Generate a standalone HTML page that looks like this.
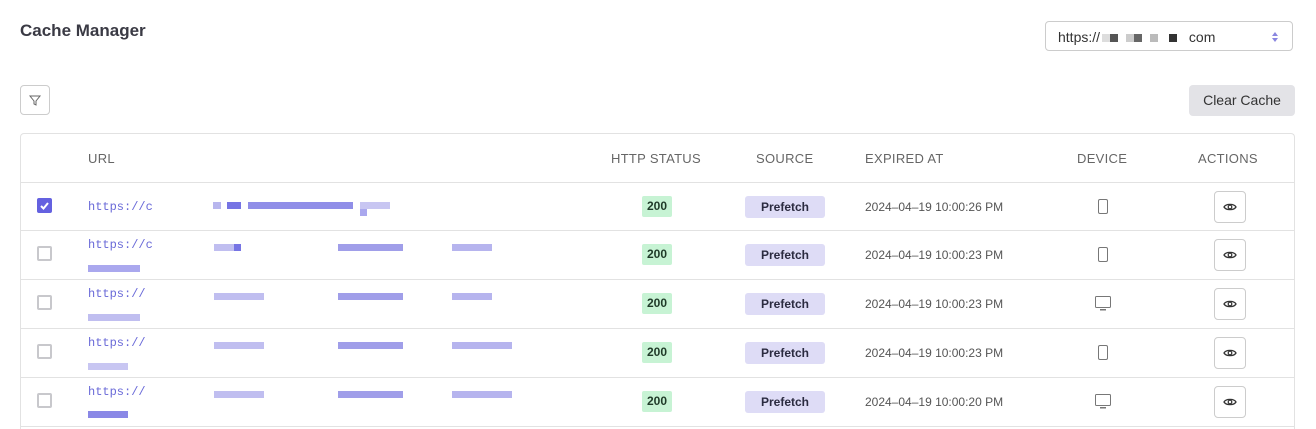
<!DOCTYPE html>
<html style="height:429px;overflow:hidden"><head><style>
body{margin:0;width:1316px;height:429px;background:#fff;font-family:"Liberation Sans",sans-serif;position:relative;overflow:hidden;color:#333}
.abs{position:absolute}
h1{position:absolute;left:20px;top:21px;margin:0;font-size:17px;font-weight:600;color:#3a3a44}
.sel{left:1045px;top:21px;width:248px;height:30px;border:1px solid #ccc;border-radius:4px;font-size:14px;line-height:30px;box-sizing:border-box;padding-left:12px;color:#333}
.filter{left:20px;top:85px;width:30px;height:30px;border:1px solid #ccc;border-radius:4px;box-sizing:border-box}
.clear{left:1189px;top:85px;width:106px;height:31px;background:#e3e3e7;border-radius:4px;font-size:14px;line-height:31px;text-align:center;color:#333}
.tbl{left:20px;top:133px;width:1275px;height:296px;border:1px solid #e2e2e2;border-bottom:none;border-radius:4px 4px 0 0;box-sizing:border-box}
.hl{position:absolute;left:21px;width:1274px;height:1px;background:#e2e2e2}
.th{position:absolute;top:151px;font-size:13px;color:#666;letter-spacing:.3px}
.cb{position:absolute;left:37px;width:15px;height:15px;border:2px solid #c8c8cc;border-radius:2px;box-sizing:border-box}
.url{position:absolute;left:88px;font-family:"Liberation Mono",monospace;font-size:12px;color:#6a6ad8}
.px{position:absolute;height:7px}
.st{position:absolute;left:642px;width:30px;height:21px;background:#c7f3d4;border-radius:2px;font-size:12px;font-weight:bold;line-height:21px;text-align:center;color:#1f3a28}
.src{position:absolute;left:745px;width:80px;height:22px;background:#dedcf6;border-radius:3px;font-size:12px;font-weight:bold;line-height:22px;text-align:center;color:#2b2b40}
.dt{position:absolute;left:865px;font-size:12px;color:#555}
.eye{position:absolute;left:1214px;width:32px;height:32px;border:1px solid #ccc;border-radius:4px;box-sizing:border-box}
.dev{position:absolute;left:1096px}
</style></head><body>
<h1>Cache Manager</h1>
<div class="abs sel">https://<span style="display:inline-block;width:8px;height:8px;background:#ddd;margin-left:2px"></span><span style="display:inline-block;width:8px;height:8px;background:#555"></span>&nbsp;&nbsp;<span style="display:inline-block;width:8px;height:8px;background:#ccc"></span><span style="display:inline-block;width:8px;height:8px;background:#666"></span>&nbsp;&nbsp;<span style="display:inline-block;width:8px;height:8px;background:#bbb"></span>&nbsp;&nbsp;&nbsp;<span style="display:inline-block;width:8px;height:8px;background:#333"></span>&nbsp;&nbsp;&nbsp;com
<svg class="abs" style="left:224px;top:9px" width="10" height="12"><path d="M2 5L5 1L8 5Z M2 7L5 11L8 7Z" fill="#8a86e0"/></svg></div>
<div class="abs filter"><svg width="28" height="28"><path d="M9 10h10l-4 5v4l-2 -1v-3z" fill="none" stroke="#666" stroke-width="1"/></svg></div>
<div class="abs clear">Clear Cache</div>
<div class="abs tbl"></div>
<div class="th" style="left:88px">URL</div>
<div class="th" style="left:611px">HTTP STATUS</div>
<div class="th" style="left:756px">SOURCE</div>
<div class="th" style="left:865px">EXPIRED AT</div>
<div class="th" style="left:1077px">DEVICE</div>
<div class="th" style="left:1198px">ACTIONS</div>
<div class="hl" style="top:182px"></div>
<div class="hl" style="top:230px"></div>
<div class="hl" style="top:279px"></div>
<div class="hl" style="top:328px"></div>
<div class="hl" style="top:377px"></div>
<div class="hl" style="top:426px"></div>

<div class="cb" style="top:198px;background:#6461e0;border-color:#6461e0"><svg width="11" height="11" style="position:absolute;left:0;top:0"><path d="M2 6l2.5 2.5L9 3" stroke="#fff" stroke-width="2" fill="none"/></svg></div>
<div class="url" style="top:200px">https://c</div>
<div class="px" style="left:213px;top:202px;width:8px;background:#b8b6ee"></div>
<div class="px" style="left:227px;top:202px;width:14px;background:#7674e4"></div>
<div class="px" style="left:248px;top:202px;width:105px;background:#908ee8"></div>
<div class="px" style="left:360px;top:202px;width:30px;background:#c8c6f2"></div>
<div class="px" style="left:360px;top:209px;width:7px;background:#aaa8ee"></div>
<div class="st" style="top:196px">200</div><div class="src" style="top:196px">Prefetch</div><div class="dt" style="top:200px">2024–04–19 10:00:26 PM</div>
<svg class="dev" style="top:199px" width="14" height="16"><rect x="2.5" y="0.5" width="9" height="14" rx="1.5" fill="none" stroke="#777"/></svg>
<div class="eye" style="top:191px"><svg width="30" height="30"><path d="M9 15c2-3.5 10-3.5 12 0c-2 3.5-10 3.5-12 0z" fill="none" stroke="#333" stroke-width="1.3"/><circle cx="15" cy="15" r="1.8" fill="none" stroke="#333" stroke-width="1.2"/></svg></div>

<div class="cb" style="top:246px"></div>
<div class="url" style="top:238px">https://c</div>
<div class="cb" style="top:295px"></div>
<div class="url" style="top:287px">https://</div>
<div class="cb" style="top:344px"></div>
<div class="url" style="top:336px">https://</div>
<div class="cb" style="top:393px"></div>
<div class="url" style="top:385px">https://</div>

<div class="px" style="left:214px;top:244px;width:20px;background:#c0bef0"></div><div class="px" style="left:234px;top:244px;width:7px;background:#7674e4"></div><div class="px" style="left:338px;top:244px;width:65px;background:#a09ee9"></div><div class="px" style="left:452px;top:244px;width:40px;background:#b6b4ee"></div><div class="px" style="left:88px;top:265px;width:52px;background:#aaa8ee"></div>
<div class="px" style="left:214px;top:293px;width:50px;background:#c0bef0"></div><div class="px" style="left:338px;top:293px;width:65px;background:#a09ee9"></div><div class="px" style="left:452px;top:293px;width:40px;background:#b6b4ee"></div><div class="px" style="left:88px;top:314px;width:52px;background:#c0bef0"></div>
<div class="px" style="left:214px;top:342px;width:50px;background:#c0bef0"></div><div class="px" style="left:338px;top:342px;width:65px;background:#a09ee9"></div><div class="px" style="left:452px;top:342px;width:60px;background:#b6b4ee"></div><div class="px" style="left:88px;top:363px;width:40px;background:#c8c6f2"></div>
<div class="px" style="left:214px;top:391px;width:50px;background:#c0bef0"></div><div class="px" style="left:338px;top:391px;width:65px;background:#a09ee9"></div><div class="px" style="left:452px;top:391px;width:60px;background:#b6b4ee"></div><div class="px" style="left:88px;top:411px;width:40px;background:#8a88e6"></div>

<div class="st" style="top:244px">200</div><div class="src" style="top:244px">Prefetch</div><div class="dt" style="top:248px">2024–04–19 10:00:23 PM</div>
<svg class="dev" style="top:247px" width="14" height="16"><rect x="2.5" y="0.5" width="9" height="14" rx="1.5" fill="none" stroke="#777"/></svg>
<div class="eye" style="top:239px"><svg width="30" height="30"><path d="M9 15c2-3.5 10-3.5 12 0c-2 3.5-10 3.5-12 0z" fill="none" stroke="#333" stroke-width="1.3"/><circle cx="15" cy="15" r="1.8" fill="none" stroke="#333" stroke-width="1.2"/></svg></div>

<div class="st" style="top:293px">200</div><div class="src" style="top:293px">Prefetch</div><div class="dt" style="top:297px">2024–04–19 10:00:23 PM</div>
<svg class="dev" style="top:296px;left:1094px" width="18" height="16"><rect x="1.5" y="0.5" width="15" height="11" rx="1" fill="none" stroke="#777"/><rect x="6" y="13" width="6" height="1.5" fill="#777"/></svg>
<div class="eye" style="top:288px"><svg width="30" height="30"><path d="M9 15c2-3.5 10-3.5 12 0c-2 3.5-10 3.5-12 0z" fill="none" stroke="#333" stroke-width="1.3"/><circle cx="15" cy="15" r="1.8" fill="none" stroke="#333" stroke-width="1.2"/></svg></div>

<div class="st" style="top:342px">200</div><div class="src" style="top:342px">Prefetch</div><div class="dt" style="top:346px">2024–04–19 10:00:23 PM</div>
<svg class="dev" style="top:345px" width="14" height="16"><rect x="2.5" y="0.5" width="9" height="14" rx="1.5" fill="none" stroke="#777"/></svg>
<div class="eye" style="top:337px"><svg width="30" height="30"><path d="M9 15c2-3.5 10-3.5 12 0c-2 3.5-10 3.5-12 0z" fill="none" stroke="#333" stroke-width="1.3"/><circle cx="15" cy="15" r="1.8" fill="none" stroke="#333" stroke-width="1.2"/></svg></div>

<div class="st" style="top:391px">200</div><div class="src" style="top:391px">Prefetch</div><div class="dt" style="top:395px">2024–04–19 10:00:20 PM</div>
<svg class="dev" style="top:394px;left:1094px" width="18" height="16"><rect x="1.5" y="0.5" width="15" height="11" rx="1" fill="none" stroke="#777"/><rect x="6" y="13" width="6" height="1.5" fill="#777"/></svg>
<div class="eye" style="top:386px"><svg width="30" height="30"><path d="M9 15c2-3.5 10-3.5 12 0c-2 3.5-10 3.5-12 0z" fill="none" stroke="#333" stroke-width="1.3"/><circle cx="15" cy="15" r="1.8" fill="none" stroke="#333" stroke-width="1.2"/></svg></div>
</body></html>
